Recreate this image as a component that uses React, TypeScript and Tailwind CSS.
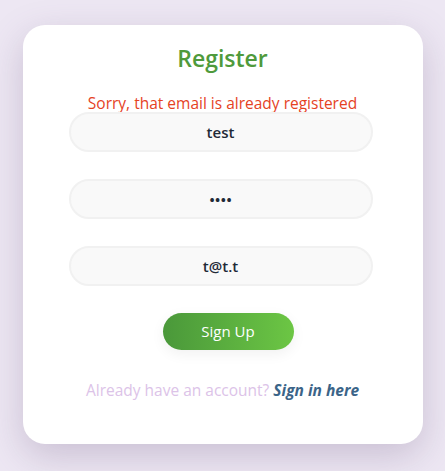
import { useState } from 'react';

const fields = [
  { name: 'username', type: 'text', value: 'test' },
  { name: 'password', type: 'password', value: 'test' },
  { name: 'email', type: 'email', value: 't@t.t' },
];

const App = () => {
  const [values, setValues] = useState<Record<string, string>>(
    Object.fromEntries(fields.map((f) => [f.name, f.value]))
  );

  return (
    <div
      className="min-h-screen bg-[#ede7f3] pt-[25px] flex justify-center"
      style={{ fontFamily: '"Open Sans", "Noto Sans", sans-serif' }}
    >
      <div className="w-[400px] h-[419px] bg-white rounded-[22px] shadow-[0_12px_36px_rgba(110,90,130,0.28)] flex flex-col items-center pt-[17px]">
        <h1 className="text-[23px] leading-[32px] font-semibold text-[#4f9a3c]">Register</h1>

        <p className="mt-[19px] text-[15.5px] leading-[20px] text-[#e5421f]">
          Sorry, that email is already registered
        </p>

        <form
          className="flex flex-col items-center gap-[27px] mt-[-1px] mr-[4px]"
          onSubmit={(e) => e.preventDefault()}
        >
          {fields.map((f) => (
            <input
              key={f.name}
              type={f.type}
              value={values[f.name]}
              onChange={(e) => setValues({ ...values, [f.name]: e.target.value })}
              className="relative w-[304px] h-[40px] rounded-full bg-[#f9f9f9] border-2 border-[#f1f1f1] text-center text-[15px] font-semibold text-[#1f2a37] outline-none"
            />
          ))}

          <button
            type="submit"
            className="ml-[15px] w-[131px] h-[37px] rounded-full bg-gradient-to-r from-[#4a983a] to-[#6cc644] text-white text-[15px] shadow-[0_4px_14px_rgba(0,0,0,0.06)]"
          >
            Sign Up
          </button>
        </form>

        <p className="mt-[29px] text-[15.5px] leading-[22px] text-[#dcc3e8]">
          Already have an account?{' '}
          <a href="#" className="font-bold italic text-[#3b6488]">
            Sign in here
          </a>
        </p>
      </div>
    </div>
  );
};

export default App;
